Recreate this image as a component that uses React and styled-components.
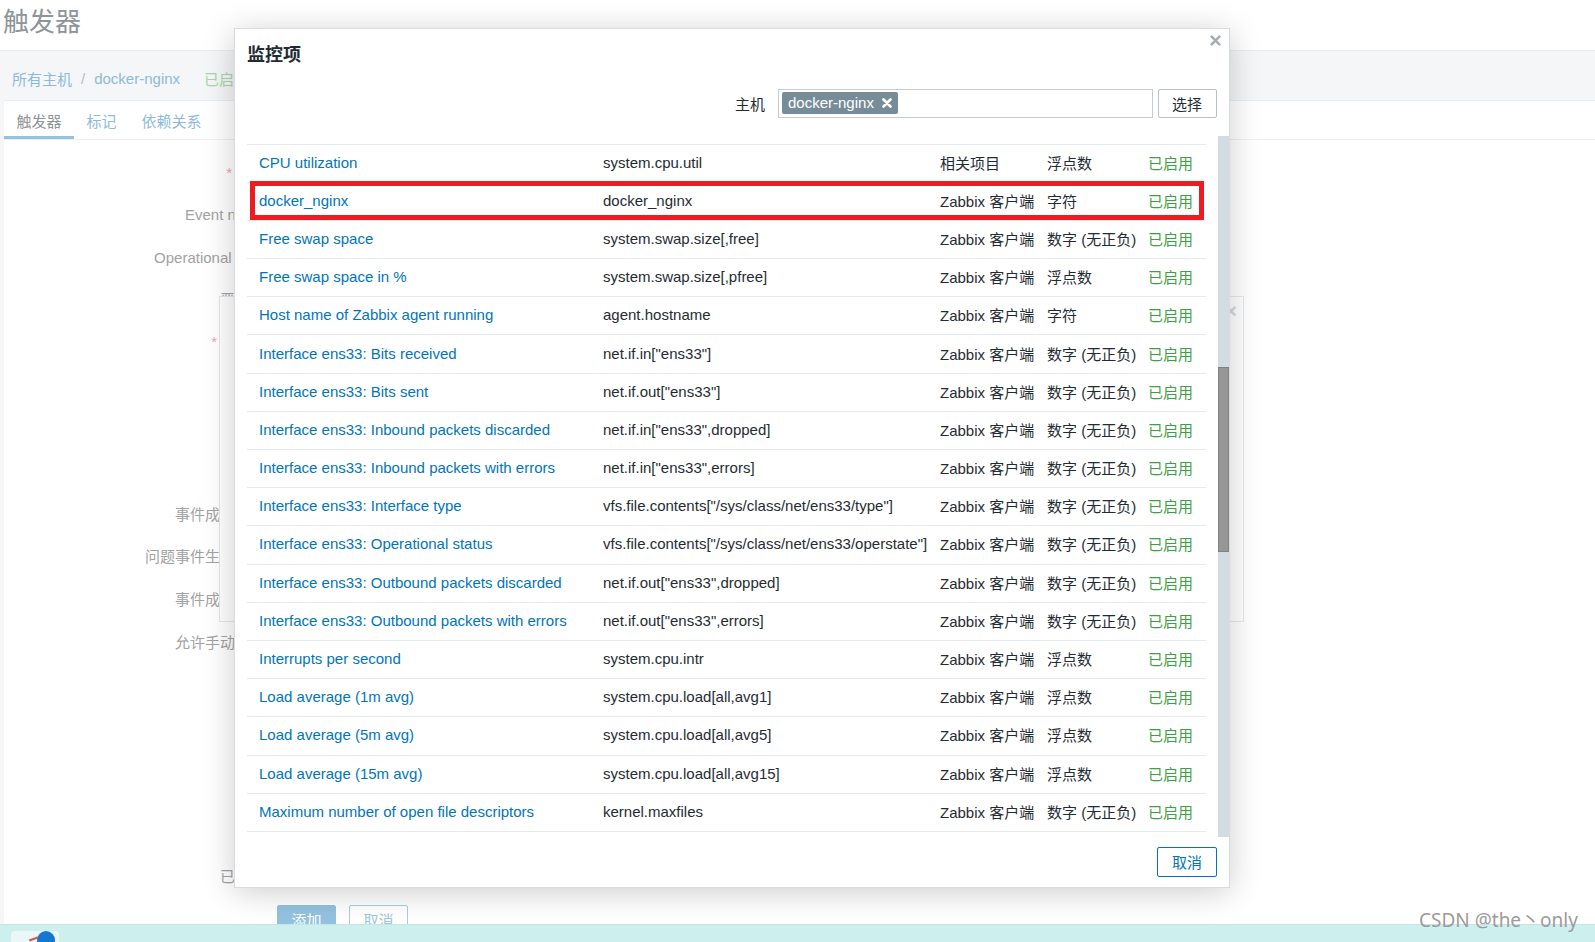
import React from "react"
import styled, { createGlobalStyle } from "styled-components"

const GlobalStyle = createGlobalStyle`
    html, body {
        margin: 0;
        padding: 0;
    }
    body {
        font-family: "Liberation Sans", Arial, "Noto Sans CJK SC", sans-serif;
        font-size: 15px;
        color: #1f2c33;
        overflow: hidden;
    }
    * {
        box-sizing: border-box;
    }
`

const items = [
    ["CPU utilization", "system.cpu.util", "相关项目", "浮点数"],
    ["docker_nginx", "docker_nginx", "Zabbix 客户端", "字符", true],
    ["Free swap space", "system.swap.size[,free]", "Zabbix 客户端", "数字 (无正负)"],
    ["Free swap space in %", "system.swap.size[,pfree]", "Zabbix 客户端", "浮点数"],
    ["Host name of Zabbix agent running", "agent.hostname", "Zabbix 客户端", "字符"],
    ["Interface ens33: Bits received", 'net.if.in["ens33"]', "Zabbix 客户端", "数字 (无正负)"],
    ["Interface ens33: Bits sent", 'net.if.out["ens33"]', "Zabbix 客户端", "数字 (无正负)"],
    ["Interface ens33: Inbound packets discarded", 'net.if.in["ens33",dropped]', "Zabbix 客户端", "数字 (无正负)"],
    ["Interface ens33: Inbound packets with errors", 'net.if.in["ens33",errors]', "Zabbix 客户端", "数字 (无正负)"],
    ["Interface ens33: Interface type", 'vfs.file.contents["/sys/class/net/ens33/type"]', "Zabbix 客户端", "数字 (无正负)"],
    ["Interface ens33: Operational status", 'vfs.file.contents["/sys/class/net/ens33/operstate"]', "Zabbix 客户端", "数字 (无正负)"],
    ["Interface ens33: Outbound packets discarded", 'net.if.out["ens33",dropped]', "Zabbix 客户端", "数字 (无正负)"],
    ["Interface ens33: Outbound packets with errors", 'net.if.out["ens33",errors]', "Zabbix 客户端", "数字 (无正负)"],
    ["Interrupts per second", "system.cpu.intr", "Zabbix 客户端", "浮点数"],
    ["Load average (1m avg)", "system.cpu.load[all,avg1]", "Zabbix 客户端", "浮点数"],
    ["Load average (5m avg)", "system.cpu.load[all,avg5]", "Zabbix 客户端", "浮点数"],
    ["Load average (15m avg)", "system.cpu.load[all,avg15]", "Zabbix 客户端", "浮点数"],
    ["Maximum number of open file descriptors", "kernel.maxfiles", "Zabbix 客户端", "数字 (无正负)"],
]

// form rows of the trigger page behind the popup
const fields = [
    { label: "名称", req: true, h: 42 },
    { label: "Event name", h: 43 },
    { label: "Operational data", h: 42 },
    { label: "严重性", h: 42 },
    { label: "表达式", req: true, h: 173 },
    { label: "事件成功迭代", h: 42 },
    { label: "问题事件生成模式", h: 43 },
    { label: "事件成功关闭", h: 43 },
    { label: "允许手动关闭", h: 42 },
    { label: "URL", h: 42 },
    { label: "描述", h: 150 },
    { label: "已启用", h: 42 },
]

const Cross = ({ size = 10, stroke = 2.5, color = "currentColor" }) => (
    <svg width={size} height={size} viewBox="0 0 10 10">
        <path d="M1.5 1.5 L8.5 8.5 M8.5 1.5 L1.5 8.5" stroke={color} strokeWidth={stroke} strokeLinecap="round" />
    </svg>
)

const App = () => {
    return (
        <Page>
            <GlobalStyle />
            <Main>
                <Header>
                    <PageTitle>触发器</PageTitle>
                </Header>
                <HostNav>
                    <Crumb>所有主机</Crumb>
                    <Sep>/</Sep>
                    <Crumb>docker-nginx</Crumb>
                    <NavStatus>已启用</NavStatus>
                    <Crumb>应用集 1</Crumb>
                    <Crumb>监控项 19</Crumb>
                    <Crumb>触发器 13</Crumb>
                </HostNav>
                <Card>
                    <TabBar>
                        <Tab $active>触发器</Tab>
                        <Tab>标记</Tab>
                        <Tab>依赖关系</Tab>
                    </TabBar>
                    <Form>
                        {fields.map(f => (
                            <FormRow key={f.label} $h={f.h}>
                                <FormLabel>
                                    {f.req && <Req>*</Req>}
                                    {f.label}
                                </FormLabel>
                            </FormRow>
                        ))}
                        <FormButtons>
                            <PageButton $primary>添加</PageButton>
                            <PageButton>取消</PageButton>
                        </FormButtons>
                    </Form>
                </Card>
            </Main>
            <Taskbar>
                <TaskTab>
                    <TaskMark />
                    <TaskDot />
                </TaskTab>
            </Taskbar>

            <GhostDialog>
                <GhostClose>×</GhostClose>
            </GhostDialog>

            <Dialog>
                <DialogHead>
                    <DialogTitle>监控项</DialogTitle>
                    <CloseBtn>
                        <Cross size={11} stroke={2.4} color="#a7adb1" />
                    </CloseBtn>
                </DialogHead>
                <FilterRow>
                    <FilterLabel>主机</FilterLabel>
                    <MultiSelect>
                        <HostTag>
                            docker-nginx
                            <Cross size={10} stroke={2.6} color="#ffffff" />
                        </HostTag>
                    </MultiSelect>
                    <SelectButton>选择</SelectButton>
                </FilterRow>
                <ScrollArea>
                    <List>
                        <Rows>
                            {items.map(([name, key, type, value, marked]) => (
                                <Row key={name}>
                                    <NameLink>{name}</NameLink>
                                    <Cell>{key}</Cell>
                                    <Cell>{type}</Cell>
                                    <Cell>{value}</Cell>
                                    <Status>已启用</Status>
                                    {marked && <Highlight />}
                                </Row>
                            ))}
                        </Rows>
                    </List>
                    <Track>
                        <Thumb />
                    </Track>
                </ScrollArea>
                <DialogFooter>
                    <CancelButton>取消</CancelButton>
                </DialogFooter>
            </Dialog>

            <Watermark>CSDN @the丶only</Watermark>
        </Page>
    )
}

export default App


const Page = styled.div`
    position: relative;
    width: 1595px;
    height: 942px;
    display: flex;
    flex-direction: column;
    background: #f4f6f8;
    overflow: hidden;
`
const Main = styled.div`
    flex: 1;
    min-height: 0;
    display: flex;
    flex-direction: column;
    overflow: hidden;
`
const Header = styled.header`
    flex-shrink: 0;
    height: 51px;
    padding: 9px 0 0 3px;
    background: #ffffff;
    border-bottom: 1px solid #e8ebed;
`
const PageTitle = styled.h1`
    margin: 0;
    font-size: 26px;
    line-height: 26px;
    font-weight: normal;
    color: #8e9498;
`
const HostNav = styled.nav`
    flex-shrink: 0;
    height: 49px;
    padding: 5px 0 0 12px;
    display: flex;
    align-items: center;
    gap: 24px;
`
const Crumb = styled.span`
    color: #8cbbd9;
`
const Sep = styled.span`
    color: #b7bec2;
    margin: 0 -15px;
`
const NavStatus = styled.span`
    color: #a8d5aa;
`
const Card = styled.section`
    flex: 1;
    margin-left: 4px;
    background: #ffffff;
    border-top: 1px solid #e9ecee;
`
const TabBar = styled.div`
    display: flex;
    height: 39px;
    border-bottom: 1px solid #eceff1;
`
const Tab = styled.div`
    height: 38px;
    padding: 4px 12.5px 0;
    display: flex;
    align-items: center;
    color: ${p => p.$active ? "#8e9498" : "#8cbbd9"};
    border-bottom: 3px solid ${p => p.$active ? "#93c1de" : "transparent"};
`
const Form = styled.div`
    padding-top: 12px;
`
const FormRow = styled.div`
    display: flex;
    height: ${p => p.$h}px;
`
const FormLabel = styled.div`
    width: 261px;
    flex-shrink: 0;
    text-align: right;
    line-height: 42px;
    color: #a2a2a2;
    white-space: nowrap;
`
const Req = styled.span`
    color: #eba9a9;
    margin-right: 3px;
`
const FormButtons = styled.div`
    display: flex;
    gap: 13px;
    margin-top: 7px;
    padding-left: 273px;
`
const PageButton = styled.div`
    width: 59px;
    height: 29px;
    display: flex;
    align-items: center;
    justify-content: center;
    border-radius: 2px;
    border: 1px solid ${p => p.$primary ? "#93c2df" : "#a9cde3"};
    background: ${p => p.$primary ? "#93c2df" : "#ffffff"};
    color: ${p => p.$primary ? "#ffffff" : "#9cc6df"};
`
const Taskbar = styled.div`
    flex-shrink: 0;
    height: 18px;
    display: flex;
    align-items: flex-end;
    background: #cdf0ee;
    border-top: 1px solid #c3e7e5;
    overflow: hidden;
`
const TaskTab = styled.div`
    position: relative;
    width: 48px;
    height: 11px;
    margin-left: 11px;
    padding-left: 26px;
    display: flex;
    background: #e9f7f6;
    border-radius: 4px 4px 0 0;
`
const TaskMark = styled.div`
    position: absolute;
    left: 18px;
    top: 7px;
    width: 9px;
    height: 2px;
    background: #d9534f;
    transform: rotate(-20deg);
`
const TaskDot = styled.div`
    width: 18px;
    height: 18px;
    border-radius: 50%;
    background: #1677d2;
    flex-shrink: 0;
`

const GhostDialog = styled.div`
    position: absolute;
    left: 219px;
    top: 296px;
    width: 1025px;
    height: 326px;
    z-index: 2;
    background: #ffffff;
    border: 1px solid #e4e8eb;
`
const GhostClose = styled.span`
    position: absolute;
    right: 6px;
    top: 4px;
    font-size: 20px;
    line-height: 20px;
    color: #d3d8dc;
    font-weight: bold;
`

const Dialog = styled.div`
    position: absolute;
    left: 234px;
    top: 28px;
    width: 996px;
    height: 860px;
    z-index: 3;
    display: flex;
    flex-direction: column;
    background: #ffffff;
    border: 1px solid #d6dce0;
    box-shadow: 0 4px 30px rgba(0, 0, 0, 0.2);
`
const DialogHead = styled.div`
    position: relative;
    padding: 14px 12px 0;
`
const DialogTitle = styled.h2`
    margin: 0;
    font-size: 18px;
    line-height: 24px;
    font-weight: bold;
    color: #1f2c33;
`
const CloseBtn = styled.span`
    position: absolute;
    top: 6px;
    right: 8px;
    display: flex;
`
const FilterRow = styled.div`
    display: flex;
    justify-content: flex-end;
    align-items: center;
    margin-top: 21.5px;
    padding-right: 12.5px;
`
const FilterLabel = styled.span`
    margin-right: 13px;
    color: #1f2c33;
`
const MultiSelect = styled.div`
    width: 374.5px;
    height: 29px;
    padding: 2px 3px;
    border: 1px solid #c4ccd1;
    display: flex;
`
const HostTag = styled.span`
    height: 22.5px;
    padding: 0 6px;
    display: inline-flex;
    align-items: center;
    gap: 8px;
    background: #768d99;
    color: #ffffff;
    border-radius: 2px;
`
const SelectButton = styled.div`
    width: 59px;
    height: 29px;
    margin-left: 5px;
    display: flex;
    align-items: center;
    justify-content: center;
    border: 1px solid #b8c2c7;
    border-radius: 2px;
    color: #1f2c33;
`
const ScrollArea = styled.div`
    height: 701px;
    margin-top: 18px;
    padding-left: 12px;
    display: flex;
    overflow: hidden;
`
const List = styled.div`
    width: 959px;
    padding-top: 8px;
`
const Rows = styled.div`
    border-top: 1px solid #e7eaec;
`
const Row = styled.div`
    position: relative;
    display: grid;
    grid-template-columns: 344px 337px 107px 101px 1fr;
    align-items: center;
    height: 38.2px;
    padding: 0 0 2px 12px;
    border-bottom: 1px solid #e7eaec;
    white-space: nowrap;
`
const Cell = styled.span`
    color: #1f2c33;
`
const NameLink = styled.span`
    color: #0275b8;
`
const Status = styled.span`
    color: #3f9f45;
`
const Highlight = styled.div`
    position: absolute;
    top: -2px;
    bottom: 0;
    left: 3px;
    right: 2px;
    border: 5px solid #ed1c24;
    pointer-events: none;
`
const Track = styled.div`
    width: 11px;
    margin-left: auto;
    display: flex;
    flex-direction: column;
    background: #d3dce1;
`
const Thumb = styled.div`
    height: 185px;
    margin-top: 231.5px;
    background: #979797;
    border: 1px solid #808080;
`
const DialogFooter = styled.div`
    display: flex;
    justify-content: flex-end;
    padding: 10px 12px 0;
`
const CancelButton = styled.div`
    width: 60px;
    height: 30px;
    display: flex;
    align-items: center;
    justify-content: center;
    border: 1px solid #0275b8;
    border-radius: 2px;
    color: #0275b8;
    background: #ffffff;
`
const Watermark = styled.div`
    position: absolute;
    left: 1419px;
    top: 909px;
    z-index: 5;
    font-family: "Noto Sans", "Noto Sans CJK SC", sans-serif;
    font-size: 19px;
    line-height: 22px;
    color: #9b9b9b;
    white-space: nowrap;
`
